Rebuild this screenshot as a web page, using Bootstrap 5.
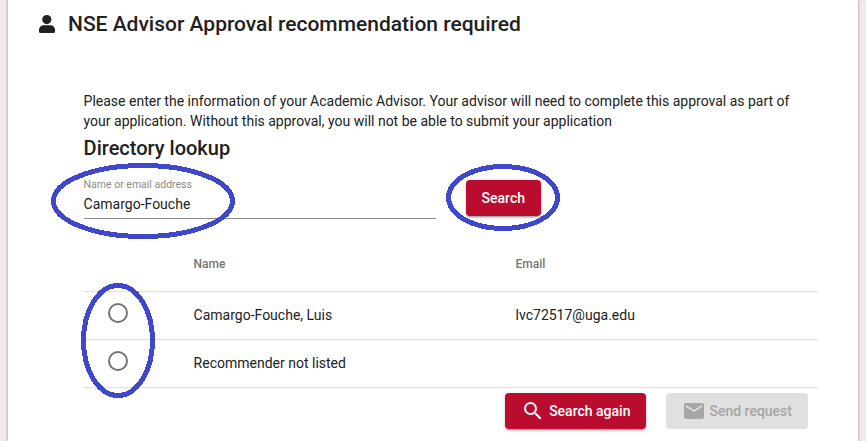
<!DOCTYPE html>
<html lang="en">
<head>
<meta charset="utf-8">
<meta name="viewport" content="width=device-width, initial-scale=1">
<title>NSE Advisor Approval</title>
<link href="https://cdn.jsdelivr.net/npm/bootstrap@5.3.0/dist/css/bootstrap.min.css" rel="stylesheet">
<style>
body{background:#f5e8ea;font:400 14px/20px Roboto,sans-serif;color:#212121;height:441px}
.sheet{margin:0 8px;height:441px;background:#fff;box-shadow:0 0 3px rgba(0,0,0,.4);padding-left:31px}
.title-bar{height:91px;padding-top:10px}
.title-bar h1,.lookup-title{font-size:20px;font-weight:500;line-height:28px}
.title-bar h1{margin-left:12px;font-size:21px}
.content{margin-left:44.6px;width:734.4px}
.lookup-title{line-height:32px;margin:0}
.intro{height:41px}
.search-row{height:71px;padding-top:16px}
.field{width:352px;height:39px;border-bottom:1px solid #8c8c8c;margin-right:30px}
.field label{display:block;font-size:10.5px;line-height:12px;color:#8a8a8a;margin-top:-1px}
.field input{display:block;border:0;padding:0;margin-top:3px;height:20px;width:100%;color:#212121;outline:0;background:none}
.act{height:36px;border:0;border-radius:4px;font-size:14px;font-weight:500;line-height:36px;padding:0 16px;white-space:nowrap}
.act-red{background:#ba0c2f;color:#fff;box-shadow:0 3px 1px -2px rgba(0,0,0,.2),0 2px 2px rgba(0,0,0,.14),0 1px 5px rgba(0,0,0,.12)}
.act-off{background:#e0e0e0;color:#a6a6a6}
.act-off svg{margin-right:3px}
.people{table-layout:fixed;width:734.4px;margin:0;border-collapse:collapse}
.people th{height:56px;font-size:12px;font-weight:500;color:#757575;padding:2px 0 0;vertical-align:middle}
.people td{height:48px;padding:0;vertical-align:middle}
.people tr{border-bottom:1px solid #e0e0e0}
.pick{appearance:none;display:block;width:20px;height:20px;border:2px solid #757575;border-radius:50%;margin:-4px 0 0 24px;background:#fff}
.footer-row{padding:5px 10px 0 0;gap:20px}
.marks{left:0;top:0;pointer-events:none}
</style>
<script src="https://cdn.jsdelivr.net/npm/bootstrap@5.3.0/dist/js/bootstrap.bundle.min.js"></script>
</head>
<body class="position-relative overflow-hidden">
<main class="sheet">
  <header class="title-bar d-flex align-items-start">
    <svg class="mt-1" width="17" height="20" viewBox="0 0 17 20" fill="#212121"><circle cx="7.8" cy="5.6" r="4.6"/><path d="M4.7 11.2H11.2C14.2 11.2 16 13.4 16 16V17.4Q16 19 14.4 19H1.6Q0 19 0 17.4V16C0 13.4 1.8 11.2 4.7 11.2Z"/></svg>
    <h1 class="mb-0">NSE Advisor Approval recommendation required</h1>
  </header>
  <div class="content">
    <p class="intro mb-0">Please enter the information of your Academic Advisor. Your advisor will need to complete this approval as part of your application. Without this approval, you will not be able to submit your application</p>
    <h2 class="lookup-title">Directory lookup</h2>
    <form class="search-row d-flex align-items-start">
      <div class="field"><label for="who">Name or email address</label><input id="who" type="text" value="Camargo-Fouche"></div>
      <button type="button" class="act act-red">Search</button>
    </form>
    <table class="people">
      <colgroup><col style="width:110px"><col style="width:322px"><col></colgroup>
      <thead><tr><th></th><th>Name</th><th>Email</th></tr></thead>
      <tbody>
        <tr><td><input class="pick" type="radio" name="p" aria-label="Camargo-Fouche, Luis"></td><td>Camargo-Fouche, Luis</td><td>lvc72517@uga.edu</td></tr>
        <tr><td><input class="pick" type="radio" name="p" aria-label="Recommender not listed"></td><td>Recommender not listed</td><td></td></tr>
      </tbody>
    </table>
    <div class="footer-row d-flex justify-content-end">
      <button type="button" class="act act-red d-flex align-items-center"><svg class="me-1" width="24" height="24" viewBox="0 0 24 24" fill="currentColor"><path d="M15.5 14h-.79l-.28-.27A6.47 6.47 0 0 0 16 9.5 6.5 6.5 0 1 0 9.5 16c1.61 0 3.09-.59 4.23-1.57l.27.28v.79l5 4.99L20.49 19l-4.99-5zm-6 0C7.01 14 5 11.99 5 9.5S7.01 5 9.5 5 14 7.01 14 9.5 11.99 14 9.5 14z"/></svg>Search again</button>
      <button type="button" class="act act-off d-flex align-items-center" aria-disabled="true"><svg width="24" height="24" viewBox="0 0 24 24" fill="currentColor"><path d="M20 4H4c-1.1 0-1.99.9-1.99 2L2 18c0 1.1.9 2 2 2h16c1.1 0 2-.9 2-2V6c0-1.1-.9-2-2-2zm0 4l-8 5-8-5V6l8 5 8-5v2z"/></svg>Send request</button>
    </div>
  </div>
</main>
<svg class="marks position-absolute" width="866" height="441" fill="none" stroke="#3f48cc" stroke-width="5" shape-rendering="crispEdges">
  <ellipse cx="143" cy="201" rx="89.5" ry="35.5"/>
  <ellipse cx="503" cy="197.5" rx="54.5" ry="31"/>
  <ellipse cx="118" cy="340.5" rx="34.5" ry="55"/>
</svg>
</body>
</html>
